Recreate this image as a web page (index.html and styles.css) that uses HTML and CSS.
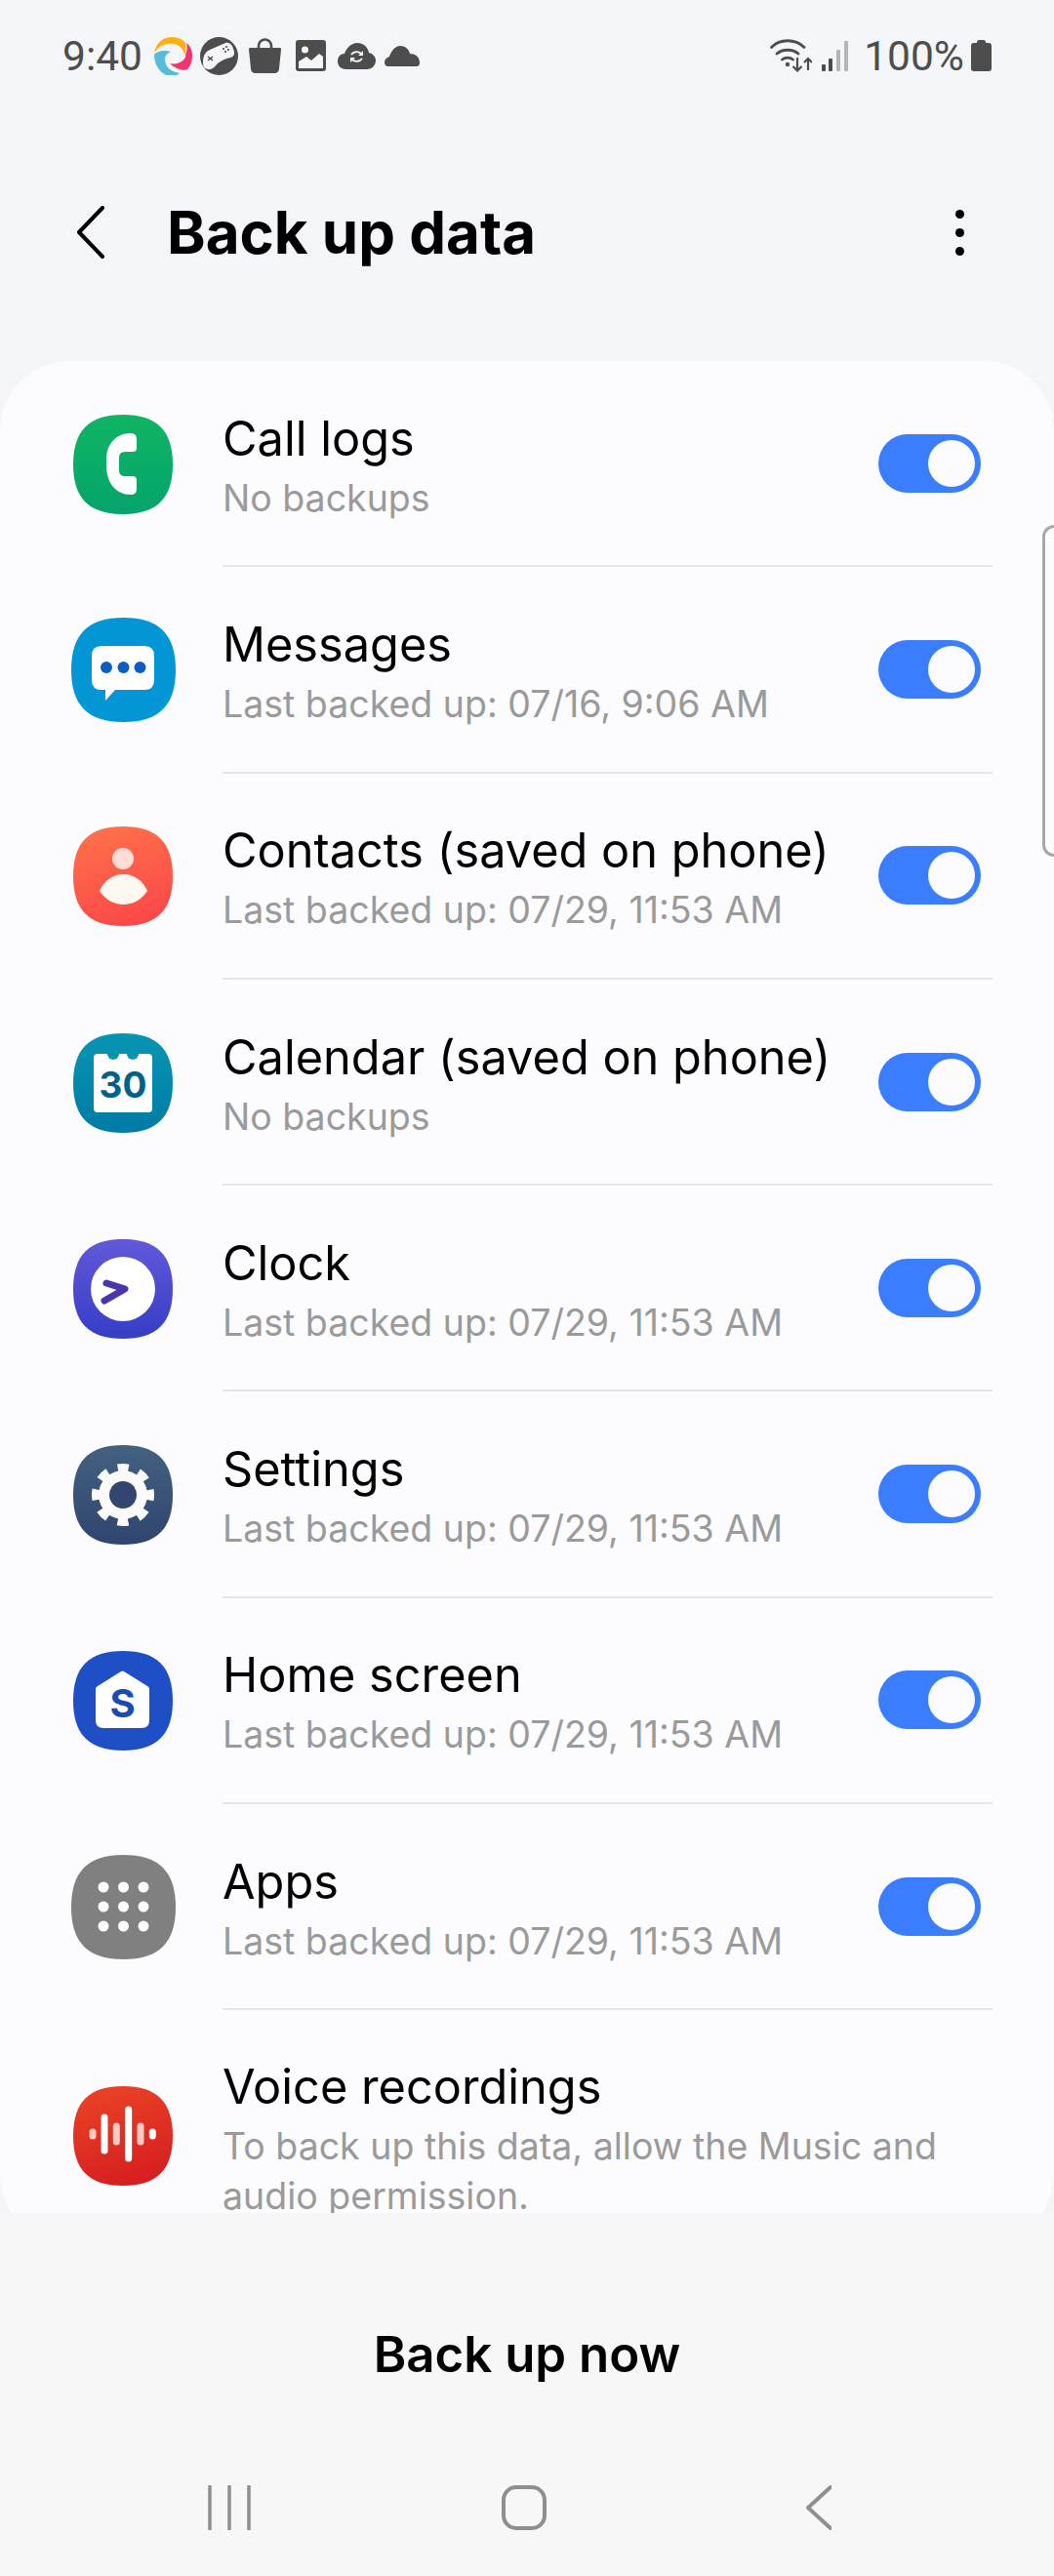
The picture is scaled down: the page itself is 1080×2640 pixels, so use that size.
FILE: index.html
```html
<!DOCTYPE html>
<html lang="en">

<head>
    <meta charset="UTF-8">
    <meta name="viewport" content="width=device-width, initial-scale=1.0">
    <title>Back up data</title>
    <link rel="stylesheet" href="styles.css">
</head>

<body>
    <svg class="defs" width="0" height="0" aria-hidden="true">
        <defs>
            <symbol id="sq" viewBox="0 0 100 100">
                <path d="M50 0C84 0 100 16 100 50S84 100 50 100 0 84 0 50 16 0 50 0Z" />
            </symbol>
            <linearGradient id="g-call" x1="0" y1="0" x2="0" y2="1"><stop offset="0" stop-color="#10b463" /><stop offset="1" stop-color="#05a46c" /></linearGradient>
            <linearGradient id="g-contacts" x1="0.3" y1="0" x2="0.6" y2="1"><stop offset="0" stop-color="#ff7049" /><stop offset="1" stop-color="#fb4849" /></linearGradient>
            <linearGradient id="g-calendar" x1="0" y1="0" x2="0" y2="1"><stop offset="0" stop-color="#0795b3" /><stop offset="1" stop-color="#007ba5" /></linearGradient>
            <linearGradient id="g-clock" x1="0" y1="0" x2="0" y2="1"><stop offset="0" stop-color="#6258da" /><stop offset="1" stop-color="#353ec6" /></linearGradient>
            <linearGradient id="g-settings" x1="0" y1="0" x2="0" y2="1"><stop offset="0" stop-color="#446180" /><stop offset="1" stop-color="#2f456f" /></linearGradient>
            <linearGradient id="g-voice" x1="0.3" y1="0" x2="0.6" y2="1"><stop offset="0" stop-color="#e94226" /><stop offset="1" stop-color="#d61e20" /></linearGradient>
        </defs>
    </svg>

    <!-- status bar -->
    <div class="status">
        <div class="status-left">
            <span class="status-text">9:40</span>
            <svg class="st-swirl" viewBox="0 0 39 39">
                <path fill="#fdb012" d="M0 16C2 6 9 0 18 0c6 0 11 2 14 6 1 4 1 8-1 12-1-5-4-9-8-10-5-2-9-1-13 0-4 1-7 4-10 8Z" />
                <path fill="#f2356f" d="M33 6c4 3 6 8 6 13 0 6-2 11-5 14-4 2-12 0-18-6 5 1 9 0 12-2 4-2 5-7 4-7 2-4 2-8 1-12Z" />
                <path fill="#56bcd8" d="M0 18c3-3 6-4 10-4 2 0 5 0 7 1-4 2-6 4-6 7 0 3 1 6 2 8 3 4 8 6 13 7-2 2-5 3-8 3C8 40 0 30 0 18Z" />
            </svg>
            <svg class="st-game" viewBox="0 0 39 39">
                <circle cx="19.5" cy="19.5" r="19.5" fill="#4d4d4d" />
                <path fill="#f4f5f8" d="M3 26C3 20 5 15 10 13L26 6C30 5 33 8 34 12 36 17 35 20 31 21 26 22 22 24 18 27 14 32 11 34 8 33 4 32 3 30 3 26Z" />
                <path fill="none" stroke="#4d4d4d" stroke-width="1.6" d="M8 20l5 4M13 20l-5 4" />
                <circle cx="24" cy="12" r="1.100" fill="#4d4d4d" /><circle cx="27" cy="10" r="1.100" fill="#4d4d4d" />
                <circle cx="26" cy="15" r="1.100" fill="#4d4d4d" /><circle cx="29" cy="13" r="1.100" fill="#4d4d4d" />
            </svg>
            <svg class="st-bag" viewBox="0 0 33 36">
                <path fill="none" stroke="#4d4d4d" stroke-width="2.600" d="M10 10V8a6.500 6.500 0 0 1 13 0v2" />
                <path fill="#4d4d4d" d="M1 10h31c1 0 1 1 1 2l-2 19c0 3-2 5-5 5H7c-3 0-5-2-5-5L0 12c0-1 0-2 1-2Z" />
            </svg>
            <svg class="st-image" viewBox="0 0 31 32">
                <rect width="31" height="32" rx="3" fill="#4d4d4d" />
                <path fill="#f4f5f8" d="M3 29v-7l8-5 5 4 8-7 4 3v12H3Z" />
                <circle cx="9.500" cy="10" r="3.500" fill="#f4f5f8" />
            </svg>
            <svg class="st-sync" viewBox="0 0 39 27">
                <path fill="#4d4d4d" d="M9 27C4 27 0 24 0 19s3-8 7-8c2-6 7-11 13-11 6 0 11 4 12 10 4 1 7 4 7 8 0 5-4 9-9 9H9Z" />
                <path fill="none" stroke="#f4f5f8" stroke-width="1.800" d="M14 12c2-3 7-4 10-1M25 16c-2 3-7 4-10 1" />
                <path fill="#f4f5f8" d="M26 8v5h-5ZM13 20v-5h5Z" />
            </svg>
            <svg class="st-cloud" viewBox="0 0 36 21">
                <path fill="#4d4d4d" d="M4 21c-3 0-4-2-4-4 0-3 2-5 5-6C7 5 11 0 16 0c5 0 9 3 10 8 5 0 10 3 10 9 0 3-1 4-4 4H4Z" />
            </svg>
        </div>
        <div class="status-right">
            <svg class="st-wifi" viewBox="0 0 43 34">
                <g fill="none" stroke="#4d4d4d" stroke-width="2.800" stroke-linecap="round">
                    <path d="M1.500 8.500C10-0.500 26-0.500 35 8.500" />
                    <path d="M7 15c6-5 16-5 22 0" />
                    <path d="M12.500 21c3-2.500 8-2.500 11 0" />
                </g>
                <circle cx="18" cy="26" r="2.200" fill="#4d4d4d" />
                <path fill="none" stroke="#4d4d4d" stroke-width="2.200" d="M28 19v13M23.500 28l4.500 4.500 4.500-4.500M39 32V20M35 24l4-4 4 4" />
            </svg>
            <svg class="st-signal" viewBox="0 0 27 31">
                <rect x="0" y="24" width="4" height="7" rx="1" fill="#4d4d4d" />
                <rect x="7" y="18" width="4" height="13" rx="1" fill="#4d4d4d" />
                <rect x="15" y="9" width="4" height="22" rx="1" fill="#b5b5b5" />
                <rect x="23" y="0" width="4" height="31" rx="1" fill="#b5b5b5" />
            </svg>
            <span class="status-text">100%</span>
            <svg class="st-battery" viewBox="0 0 21 32">
                <path fill="#4d4d4d" d="M6 2c0-1 1-2 2-2h5c1 0 2 1 2 2v1h3c2 0 3 1 3 3v23c0 2-1 3-3 3H3c-2 0-3-1-3-3V6c0-2 1-3 3-3h3V2Z" />
            </svg>
        </div>
    </div>

    <!-- title -->
    <header class="appbar">
        <svg class="back" viewBox="0 0 28 54">
            <path d="M26 2 2 27l24 25" fill="none" stroke="#000" stroke-width="4" stroke-linecap="round" stroke-linejoin="round" />
        </svg>
        <h1>Back up data</h1>
        <div class="more"><span></span><span></span><span></span></div>
    </header>

    <main class="scroll">
        <ul class="card">
            <li class="row">
                <div class="icon-box">
                    <svg class="app-icon" viewBox="0 0 102 102">
                        <use href="#sq" width="102" height="102" fill="url(#g-call)" />
                        <path fill="#fff" d="M59 19Q65 19 65 25V34Q65 38 61 38H53Q47 38 47 44V57Q47 63 53 63H61Q65 63 65 67V76Q65 82 59 82C44 82 34 70 34 52V46C34 30 44 19 59 19Z" />
                    </svg>
                </div>
                <div class="row-body">
                    <div class="row-text">
                        <div class="row-title">Call logs</div>
                        <div class="row-sub">No backups</div>
                    </div>
                    <div class="switch"><span></span></div>
                </div>
            </li>
            <li class="row">
                <div class="icon-box">
                    <svg class="app-icon wide" viewBox="0 0 107 107">
                        <use href="#sq" width="107" height="107" fill="#0296d6" />
                        <path fill="#fff" d="M31 29H75Q85 29 85 39V64Q85 74 75 74H45L35 85V74H31Q21 74 21 64V39Q21 29 31 29Z" />
                        <circle cx="36" cy="51" r="6" fill="#0a5fc0" /><circle cx="53.500" cy="51" r="6" fill="#0a5fc0" /><circle cx="70.500" cy="51" r="6" fill="#0a5fc0" />
                    </svg>
                </div>
                <div class="row-body">
                    <div class="row-text">
                        <div class="row-title">Messages</div>
                        <div class="row-sub">Last backed up: 07/16, 9:06 AM</div>
                    </div>
                    <div class="switch"><span></span></div>
                </div>
            </li>
            <li class="row">
                <div class="icon-box">
                    <svg class="app-icon" viewBox="0 0 102 102">
                        <use href="#sq" width="102" height="102" fill="url(#g-contacts)" />
                        <circle cx="51" cy="33" r="11" fill="#ffdcd6" />
                        <path fill="#fff8f0" d="M27 66C32 55 41 49 51.500 49 62 49 71 55 76 66 70 75 61 80 51.500 80 42 80 33 75 27 66Z" />
                    </svg>
                </div>
                <div class="row-body">
                    <div class="row-text">
                        <div class="row-title">Contacts (saved on phone)</div>
                        <div class="row-sub">Last backed up: 07/29, 11:53 AM</div>
                    </div>
                    <div class="switch"><span></span></div>
                </div>
            </li>
            <li class="row">
                <div class="icon-box">
                    <svg class="app-icon" viewBox="0 0 102 102">
                        <use href="#sq" width="102" height="102" fill="url(#g-calendar)" />
                        <rect x="21" y="21" width="60" height="60" rx="4" fill="#fff" />
                        <circle cx="41" cy="21" r="6" fill="#0792b1" /><circle cx="61" cy="21" r="6" fill="#0792b1" />
                        <text class="icon-num" x="51" y="66" text-anchor="middle">30</text>
                    </svg>
                </div>
                <div class="row-body">
                    <div class="row-text">
                        <div class="row-title">Calendar (saved on phone)</div>
                        <div class="row-sub">No backups</div>
                    </div>
                    <div class="switch"><span></span></div>
                </div>
            </li>
            <li class="row">
                <div class="icon-box">
                    <svg class="app-icon" viewBox="0 0 102 102">
                        <use href="#sq" width="102" height="102" fill="url(#g-clock)" />
                        <circle cx="51" cy="51" r="33" fill="#fff" />
                        <path d="M34 45 53 51 32 63" fill="none" stroke="#4a35ad" stroke-width="7" stroke-linecap="round" stroke-linejoin="round" />
                    </svg>
                </div>
                <div class="row-body">
                    <div class="row-text">
                        <div class="row-title">Clock</div>
                        <div class="row-sub">Last backed up: 07/29, 11:53 AM</div>
                    </div>
                    <div class="switch"><span></span></div>
                </div>
            </li>
            <li class="row">
                <div class="icon-box">
                    <svg class="app-icon" viewBox="0 0 102 102">
                        <use href="#sq" width="102" height="102" fill="url(#g-settings)" />
                        <circle cx="51" cy="51" r="25" fill="#fafafa" />
                        <circle cx="51" cy="51" r="28" fill="none" stroke="#fafafa" stroke-width="8" stroke-dasharray="11 10.990" stroke-dashoffset="5.500" />
                        <circle cx="51" cy="51" r="14" fill="#33466f" />
                    </svg>
                </div>
                <div class="row-body">
                    <div class="row-text">
                        <div class="row-title">Settings</div>
                        <div class="row-sub">Last backed up: 07/29, 11:53 AM</div>
                    </div>
                    <div class="switch"><span></span></div>
                </div>
            </li>
            <li class="row">
                <div class="icon-box">
                    <svg class="app-icon" viewBox="0 0 102 102">
                        <use href="#sq" width="102" height="102" fill="#1e4fc6" />
                        <path fill="#fff" d="M49 21Q50.500 20 52 21L76 36Q78 37 78 39V71Q78 79 70 79H31Q23 79 23 71V39Q23 37 25 36Z" />
                        <text class="icon-letter" x="50.500" y="68" text-anchor="middle">S</text>
                    </svg>
                </div>
                <div class="row-body">
                    <div class="row-text">
                        <div class="row-title">Home screen</div>
                        <div class="row-sub">Last backed up: 07/29, 11:53 AM</div>
                    </div>
                    <div class="switch"><span></span></div>
                </div>
            </li>
            <li class="row">
                <div class="icon-box">
                    <svg class="app-icon wide" viewBox="0 0 107 107">
                        <use href="#sq" width="107" height="107" fill="#808080" />
                        <g fill="#fff">
                            <circle cx="33" cy="33" r="5.500" /><circle cx="53.500" cy="33" r="5.500" /><circle cx="74" cy="33" r="5.500" />
                            <circle cx="33" cy="53" r="5.500" /><circle cx="53.500" cy="53" r="5.500" /><circle cx="74" cy="53" r="5.500" />
                            <circle cx="33" cy="73" r="5.500" /><circle cx="53.500" cy="73" r="5.500" /><circle cx="74" cy="73" r="5.500" />
                        </g>
                    </svg>
                </div>
                <div class="row-body">
                    <div class="row-text">
                        <div class="row-title">Apps</div>
                        <div class="row-sub">Last backed up: 07/29, 11:53 AM</div>
                    </div>
                    <div class="switch"><span></span></div>
                </div>
            </li>
            <li class="row">
                <div class="icon-box">
                    <svg class="app-icon" viewBox="0 0 102 102">
                        <use href="#sq" width="102" height="102" fill="url(#g-voice)" />
                        <rect x="16.500" y="43.500" width="7" height="11" rx="3.500" fill="#f9c9c2" />
                        <rect x="28.500" y="28.500" width="7" height="41" rx="3.500" fill="#fff" />
                        <rect x="40.800" y="37.500" width="7" height="23" rx="3.500" fill="#f9c9c2" />
                        <rect x="53.200" y="20.500" width="7" height="57" rx="3.500" fill="#fff" />
                        <rect x="65.500" y="37.500" width="7" height="23" rx="3.500" fill="#f9c9c2" />
                        <rect x="77.800" y="43.500" width="7" height="11" rx="3.500" fill="#fff" />
                    </svg>
                </div>
                <div class="row-body last">
                    <div class="row-text">
                        <div class="row-title">Voice recordings</div>
                        <div class="row-sub">To back up this data, allow the Music and audio permission.</div>
                    </div>
                </div>
            </li>
        </ul>
    </main>

    <div class="edge-handle"></div>

    <footer class="bottom">
        <div class="action">Back up now</div>
        <nav class="nav">
            <div class="nav-item">
                <svg class="nav-recent" viewBox="0 0 44 46">
                    <path d="M2 1V45M22 1V45M42 1V45" fill="none" stroke="#8f8f8f" stroke-width="3.500" stroke-linecap="round" />
                </svg>
            </div>
            <div class="nav-item"><div class="nav-home"></div></div>
            <div class="nav-item">
                <svg class="nav-back" viewBox="0 0 26 46">
                    <path d="M25 2 2 23l23 21" fill="none" stroke="#8f8f8f" stroke-width="4" stroke-linecap="round" stroke-linejoin="round" />
                </svg>
            </div>
        </nav>
    </footer>
</body>

</html>
```

FILE: styles.css
```css
* {
    box-sizing: border-box;
}

html,
body {
    margin: 0;
    padding: 0;
}

body {
    position: relative;
    display: flex;
    flex-direction: column;
    width: 1080px;
    height: 2640px;
    overflow: hidden;
    background: #f4f5f8;
    font-family: Inter, "Noto Sans", sans-serif;
    color: #000;
}

.defs {
    position: absolute;
}

/* status bar */
.status {
    display: flex;
    justify-content: space-between;
    align-items: center;
    height: 114px;
    padding: 0 64px 0 64px;
    flex: none;
}

.status-left,
.status-right {
    display: flex;
    align-items: center;
}

.status-text {
    font-family: Roboto, sans-serif;
    font-size: 42.500px;
    color: #4d4d4d;
}

.st-swirl { width: 39px; height: 39px; margin-left: 12px; }
.st-game { width: 39px; height: 39px; margin-left: 8px; }
.st-bag { width: 33px; height: 36px; margin-left: 11px; }
.st-image { width: 31px; height: 32px; margin-left: 15px; }
.st-sync { width: 39px; height: 27px; margin-left: 12px; }
.st-cloud { width: 36px; height: 21px; margin-left: 9px; }
.st-wifi { width: 43px; height: 34px; }
.st-signal { width: 27px; height: 31px; margin-left: 10px; margin-right: 16px; }
.st-battery { width: 21px; height: 32px; margin-left: 7px; }

/* title */
.appbar {
    display: flex;
    align-items: center;
    flex: none;
    height: 256px;
    padding: 50px 92px 58px 79px;
}

.back {
    width: 28px;
    height: 54px;
    flex: none;
}

.appbar h1 {
    flex: 1;
    margin: 0 0 0 64px;
    font-size: 60px;
    font-weight: 700;
}

.more {
    display: flex;
    flex-direction: column;
    gap: 10px;
}

.more span {
    width: 9px;
    height: 9px;
    border-radius: 50%;
    background: #000;
}

/* list */
.scroll {
    height: 1898px;
    flex: none;
    overflow: hidden;
}

.card {
    height: 1930px;
    margin: 0;
    padding: 0;
    list-style: none;
    background: #fcfcff;
    border-radius: 72px;
    overflow: hidden;
}

.row {
    display: flex;
    align-items: center;
}

.icon-box {
    display: flex;
    justify-content: center;
    width: 108px;
    margin-left: 72px;
    margin-right: 48px;
    flex: none;
}

.app-icon {
    display: block;
    width: 102px;
    height: 102px;
}

.app-icon.wide {
    width: 107px;
    height: 107px;
}

.icon-num {
    font-family: Inter, sans-serif;
    font-size: 37px;
    font-weight: 700;
    fill: #00628a;
}

.icon-letter {
    font-family: Inter, sans-serif;
    font-size: 40px;
    font-weight: 700;
    fill: #1c4bb4;
}

.row-body {
    display: flex;
    align-items: center;
    justify-content: space-between;
    flex: 1;
    min-height: 211.300px;
    margin-right: 63px;
    padding: 16px 12px 16px 0;
    border-bottom: 2px solid #e6e6e8;
}

.row-body.last {
    min-height: 258px;
    border-bottom: none;
    padding-right: 0;
}

.row-text {
    padding-top: 6px;
}

.row-title {
    font-size: 48.700px;
    line-height: 60px;
}

.row-sub {
    margin-top: 5px;
    font-size: 37.500px;
    line-height: 51px;
    color: #9a9a9a;
}

.switch {
    display: flex;
    justify-content: flex-end;
    align-items: center;
    width: 105px;
    height: 60px;
    padding-right: 6px;
    flex: none;
    border-radius: 30px;
    background: #3a7dff;
}

.switch span {
    width: 48px;
    height: 48px;
    border-radius: 50%;
    background: #fcfcff;
}

/* edge panel handle, sits over the list */
.edge-handle {
    position: absolute;
    top: 538px;
    left: 1068px;
    width: 14px;
    height: 340px;
    border: 3px solid #a8a8a8;
    border-right: none;
    border-radius: 12px 0 0 12px;
}

/* bottom */
.bottom {
    flex: 1;
    background: #f7f7f8;
}

.action {
    padding-top: 115px;
    font-size: 51px;
    font-weight: 600;
    line-height: 60px;
    text-align: center;
}

.nav {
    display: flex;
    margin-top: 104px;
    padding: 0 84px;
}

.nav-item {
    display: flex;
    justify-content: center;
    width: 302px;
}

.nav-recent {
    width: 44px;
    height: 46px;
}

.nav-home {
    width: 46px;
    height: 46px;
    border: 4px solid #8f8f8f;
    border-radius: 15px;
}

.nav-back {
    width: 26px;
    height: 46px;
}
```
